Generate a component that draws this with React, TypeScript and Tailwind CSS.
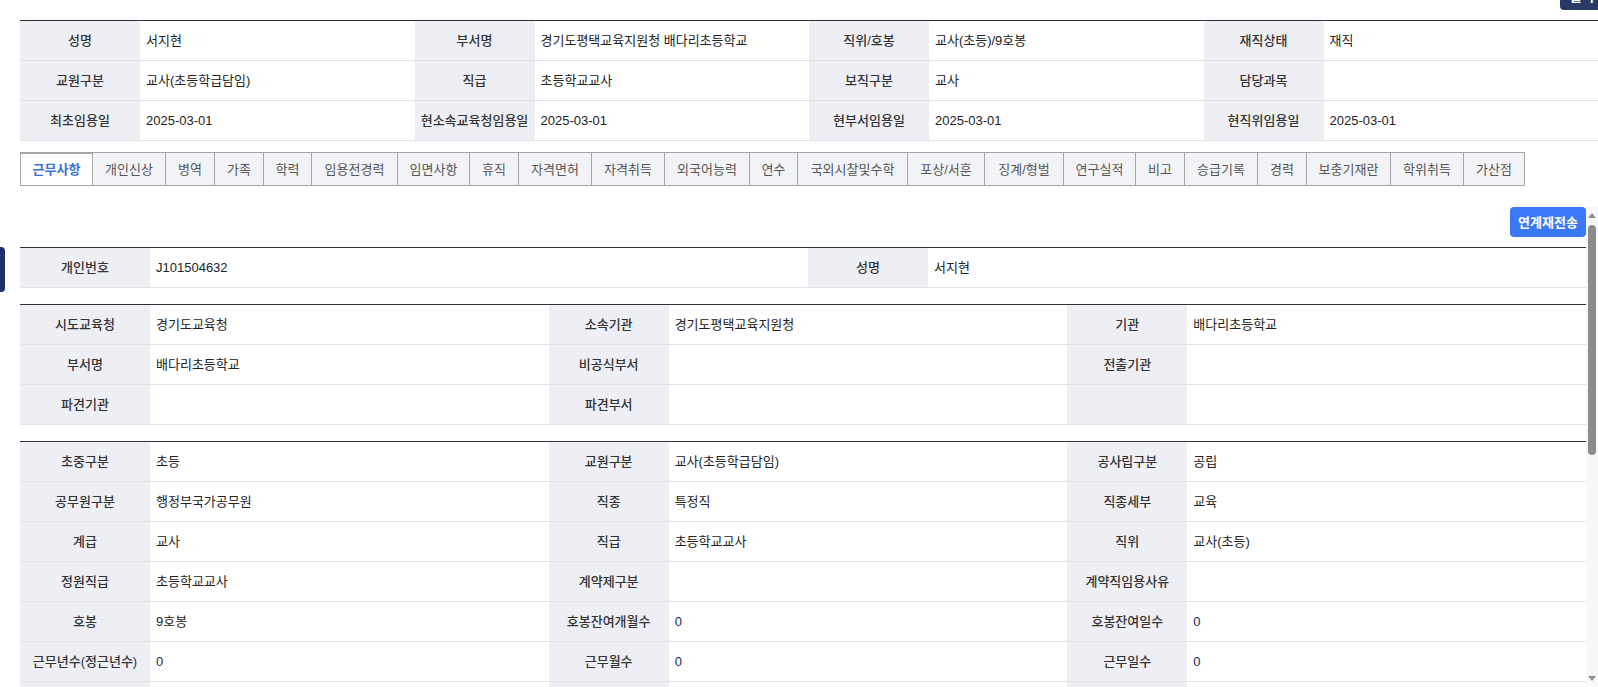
import React from "react";

type Cell = { l: string; v: string; num?: boolean };

function Label({ t }: { t: string }) {
  return (
    <div className="flex items-center justify-center bg-[#eeeff4] text-[#333] font-medium whitespace-nowrap">
      <span>{t}</span>
    </div>
  );
}

function Value({ t, num }: { t: string; num?: boolean }) {
  return (
    <div
      className={
        num
          ? "flex items-center pl-[6px] text-[#1a2a5a] whitespace-nowrap"
          : "flex items-center pl-[6px] text-[#222] whitespace-nowrap"
      }
    >
      <span>{t}</span>
    </div>
  );
}

function Table({ rows, cols }: { rows: Cell[][]; cols: string }) {
  return (
    <div className="border-t border-[#2e3138]">
      {rows.map((r, i) => (
        <div key={i} className={`grid ${cols} h-[40px] border-b border-[#e2e2e2]`}>
          {r.map((c, j) => (
            <React.Fragment key={j}>
              <Label t={c.l} />
              <Value t={c.v} num={c.num} />
            </React.Fragment>
          ))}
        </div>
      ))}
    </div>
  );
}

const topRows: Cell[][] = [
  [
    { l: "성명", v: "서지현" },
    { l: "부서명", v: "경기도평택교육지원청 배다리초등학교" },
    { l: "직위/호봉", v: "교사(초등)/9호봉" },
    { l: "재직상태", v: "재직" },
  ],
  [
    { l: "교원구분", v: "교사(초등학급담임)" },
    { l: "직급", v: "초등학교교사" },
    { l: "보직구분", v: "교사" },
    { l: "담당과목", v: "" },
  ],
  [
    { l: "최초임용일", v: "2025-03-01" },
    { l: "현소속교육청임용일", v: "2025-03-01" },
    { l: "현부서임용일", v: "2025-03-01" },
    { l: "현직위임용일", v: "2025-03-01" },
  ],
];

const t1: Cell[][] = [
  [
    { l: "개인번호", v: "J101504632" },
    { l: "성명", v: "서지현" },
  ],
];

const t2: Cell[][] = [
  [
    { l: "시도교육청", v: "경기도교육청" },
    { l: "소속기관", v: "경기도평택교육지원청" },
    { l: "기관", v: "배다리초등학교" },
  ],
  [
    { l: "부서명", v: "배다리초등학교" },
    { l: "비공식부서", v: "" },
    { l: "전출기관", v: "" },
  ],
  [
    { l: "파견기관", v: "" },
    { l: "파견부서", v: "" },
    { l: "", v: "" },
  ],
];

const t3: Cell[][] = [
  [
    { l: "초중구분", v: "초등" },
    { l: "교원구분", v: "교사(초등학급담임)" },
    { l: "공사립구분", v: "공립" },
  ],
  [
    { l: "공무원구분", v: "행정부국가공무원" },
    { l: "직종", v: "특정직" },
    { l: "직종세부", v: "교육" },
  ],
  [
    { l: "계급", v: "교사" },
    { l: "직급", v: "초등학교교사" },
    { l: "직위", v: "교사(초등)" },
  ],
  [
    { l: "정원직급", v: "초등학교교사" },
    { l: "계약제구분", v: "" },
    { l: "계약직임용사유", v: "" },
  ],
  [
    { l: "호봉", v: "9호봉" },
    { l: "호봉잔여개월수", v: "0", num: true },
    { l: "호봉잔여일수", v: "0", num: true },
  ],
  [
    { l: "근무년수(정근년수)", v: "0", num: true },
    { l: "근무월수", v: "0", num: true },
    { l: "근무일수", v: "0", num: true },
  ],
  [
    { l: "승급예정일", v: "2026-03-01" },
    { l: "최종승급일", v: "2025-03-01" },
    { l: "호봉획정일", v: "2025-03-01" },
  ],
];

const tabs: { t: string; w: string }[] = [
  { t: "근무사항", w: "w-[73px]" },
  { t: "개인신상", w: "w-[73px]" },
  { t: "병역", w: "w-[49px]" },
  { t: "가족", w: "w-[49px]" },
  { t: "학력", w: "w-[48px]" },
  { t: "임용전경력", w: "w-[86px]" },
  { t: "임면사항", w: "w-[72px]" },
  { t: "휴직", w: "w-[49px]" },
  { t: "자격면허", w: "w-[73px]" },
  { t: "자격취득", w: "w-[73px]" },
  { t: "외국어능력", w: "w-[85px]" },
  { t: "연수", w: "w-[48px]" },
  { t: "국외시찰및수학", w: "w-[110px]" },
  { t: "포상/서훈", w: "w-[77px]" },
  { t: "징계/형벌", w: "w-[79px]" },
  { t: "연구실적", w: "w-[72px]" },
  { t: "비고", w: "w-[49px]" },
  { t: "승급기록", w: "w-[73px]" },
  { t: "경력", w: "w-[49px]" },
  { t: "보충기재란", w: "w-[84px]" },
  { t: "학위취득", w: "w-[73px]" },
  { t: "가산점", w: "w-[61px]" },
];

function ScrollBar() {
  return (
    <div className="w-[12px] h-[480px] bg-[#f8f8f8] flex flex-col items-center">
      <svg width="8" height="5" viewBox="0 0 8 5" className="mt-[6px] shrink-0">
        <path d="M4 0 L8 5 L0 5 Z" fill="#8f8f8f" />
      </svg>
      <div className="mt-[7px] w-[8px] h-[230px] rounded-full bg-[#8c8c8c] shrink-0" />
      <div className="flex-1" />
      <svg width="8" height="5" viewBox="0 0 8 5" className="mb-[6px] shrink-0">
        <path d="M0 0 L8 0 L4 5 Z" fill="#8f8f8f" />
      </svg>
    </div>
  );
}

export default function App() {
  return (
    <div className="relative w-[1598px] h-[687px] overflow-hidden bg-white text-[13px] leading-none font-['Liberation_Sans','Noto_Sans_CJK_KR',sans-serif]">
      <div className="absolute left-0 top-[247px] w-[5px] h-[45px] rounded-r-[4px] bg-[#1f3166]" />

      <div className="flex justify-end h-[20px]">
        <button className="-mt-[20px] -mr-[12px] w-[50px] h-[30px] pt-[3px] pr-[6px] flex items-center justify-center rounded-[4px] bg-[#2a3a66] text-white font-semibold">
          출력
        </button>
      </div>

      <div className="pl-[20px]">
        <Table rows={topRows} cols="grid-cols-[120px_1fr_120px_1fr_120px_1fr_120px_1fr]" />

        <div className="mt-[11px] flex h-[34px]">
          {tabs.map((tb, i) => (
            <div
              key={tb.t}
              className={
                i === 0
                  ? `${tb.w} flex items-center justify-center border-l border-r border-b border-t-2 border-[#a6a6a6] bg-white text-[#3a72dc] font-semibold`
                  : `${tb.w} flex items-center justify-center border-r border-t border-b border-[#a6a6a6] bg-[#f2f3f7] text-[#555]`
              }
            >
              <span>{tb.t}</span>
            </div>
          ))}
        </div>

        <div className="mt-[21px] flex h-[480px]">
          <div className="flex-1 h-[480px] overflow-hidden">
            <div className="flex justify-end">
              <button className="h-[30px] w-[76px] rounded-[4px] bg-[#3b78f6] text-white font-semibold">
                연계재전송
              </button>
            </div>
            <div className="mt-[10px]">
              <Table rows={t1} cols="grid-cols-[130px_658px_120px_1fr]" />
            </div>
            <div className="mt-[16px]">
              <Table rows={t2} cols="grid-cols-[130px_1fr_120px_1fr_120px_1fr]" />
            </div>
            <div className="mt-[16px]">
              <Table rows={t3} cols="grid-cols-[130px_1fr_120px_1fr_120px_1fr]" />
            </div>
          </div>
          <ScrollBar />
        </div>
      </div>
    </div>
  );
}
